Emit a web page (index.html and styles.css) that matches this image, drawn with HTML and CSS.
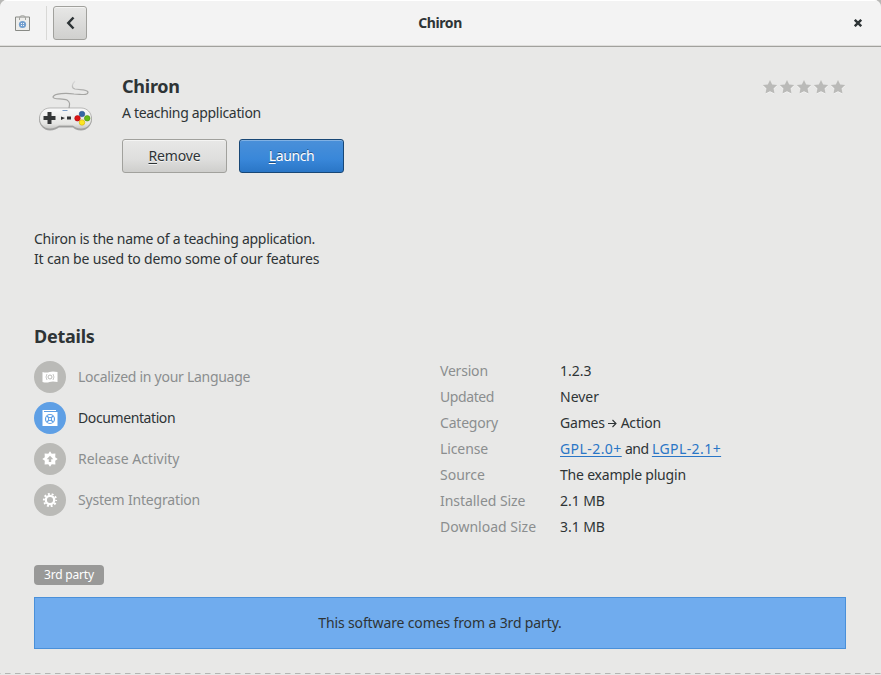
FILE: index.html
```html
<!DOCTYPE html>
<html lang="en">
<head>
<meta charset="utf-8">
<title>Chiron</title>
<link rel="stylesheet" href="styles.css">
</head>
<body>
<div class="window">
<header class="headerbar">
  <svg class="app-icon" width="16" height="16" viewBox="0 0 16 16"><path d="M.5 2h14v13.500H.5z" fill="#eeeeec" stroke="#888a85"/><path d="M4.500 5V3Q4.500.6 7.500.6T10.500 3V5" fill="none" stroke="#a3a49f"/><circle cx="7.500" cy="9.500" r="3.600" fill="#729fcf"/><path d="M6 8h1v1H6zm2 0h1v1H8zm-2 2h1v1H6zm2 0h1v1H8z" fill="#f3f3f3"/></svg>
  <span class="separator"></span>
  <button class="back" aria-label="Back"><svg width="16" height="16" viewBox="0 0 16 16"><path d="M11.500 2.500 6.300 8l5.200 5.500" fill="none" stroke="#2e3436" stroke-width="2.500"/></svg></button>
  <h1 class="title">Chiron</h1>
  <svg class="close" width="8" height="8" viewBox="0 0 8 8"><path d="M.8.8l6.400 6.400M7.200.8.8 7.200" stroke="#2e3436" stroke-width="2.400"/></svg>
</header>
<main class="content">
  <section class="hero">
    <svg class="gamepad" width="64" height="64" viewBox="0 0 64 64">
      <defs>
        <linearGradient id="shell" x2="0" y2="1"><stop stop-color="#fafafa"/><stop offset=".75" stop-color="#e5e5e3"/><stop offset="1" stop-color="#c4c4c2"/></linearGradient>
        <linearGradient id="cord" x2="0" y2="1"><stop stop-color="#aaa" stop-opacity=".2"/><stop offset=".4" stop-color="#a5a5a3"/></linearGradient>
      </defs>
      <path d="M41 6c-3 3-4 7 0 8 5 1 12 0 13 3 0 4-7 2-14 2-7-1-20-1-21 3 0 3 10 1 14 3 3 2 3 4 2 8" fill="none" stroke="url(#cord)" stroke-width="1.200"/>
      <path d="M16 34h31c6 0 10.800 4.500 10.800 10.500S53 55.500 47 55.500c-4 0-7-2-8-3H25c-2 1-5 3-9 3C10 55.500 5.200 50.500 5.200 44.500S10 34 16 34z" fill="#777" opacity=".6"/>
      <path d="M16 33h31c6 0 10.500 4.500 10.500 10.500S53 54 47 54c-4 0-7-2-8-3H25c-2 1-5 3-9 3C10 54 5.500 49.500 5.500 43.500S10 33 16 33z" fill="url(#shell)" stroke="#929290" stroke-width=".6"/>
      <path d="M13.500 37h4v4h4v4h-4v4h-4v-4h-4v-4h4z" fill="#343637"/>
      <path d="M27 41.500l4 1.500-4 2zM33 41.500h4v3h-4z" fill="#303234"/><path d="M28.500 35.500h5" stroke="#7b9cc5"/>
      <g stroke-width=".5"><circle cx="48" cy="39" r="2.800" fill="#3465a4" stroke="#204a87"/><circle cx="43.500" cy="43.300" r="2.800" fill="#dc1414" stroke="#a40000"/><circle cx="53.200" cy="43.300" r="2.800" fill="#65ba17" stroke="#438202"/><circle cx="48" cy="47.500" r="2.800" fill="#fce521" stroke="#c4a000"/></g>
    </svg>
    <div class="intro">
      <h2 class="name">Chiron</h2>
      <p class="summary">A teaching application</p>
      <div class="actions">
        <button class="button remove"><span><u>R</u>emove</span></button>
        <button class="button launch"><span><u>L</u>aunch</span></button>
      </div>
    </div>
    <svg class="stars" width="84" height="16" viewBox="0 0 84 16">
      <defs><path id="star" d="M8 1l2.200 4.500 5 .600-3.600 3.500.900 5L8 12.300l-4.500 2.300.900-5L.800 6.100l5-.600z"/></defs>
      <g fill="#fff" opacity=".7" transform="translate(0 .700)"><use href="#star"/><use href="#star" x="17"/><use href="#star" x="34"/><use href="#star" x="51"/><use href="#star" x="68"/></g>
      <g fill="#babab8"><use href="#star"/><use href="#star" x="17"/><use href="#star" x="34"/><use href="#star" x="51"/><use href="#star" x="68"/></g>
    </svg>
  </section>
  <p class="description"><span class="line-one">Chiron is the name of a teaching application.</span><br><span class="line-two">It can be used to demo some of our features</span></p>
  <h2 class="details-title">Details</h2>
  <section class="details">
    <ul class="features">
      <li><span class="round"><svg width="16" height="16" viewBox="0 0 16 16"><path d="M.5 3q4 1 7 0t8 0v10q-5-1-8 0t-7 0z" fill="#fff"/><g fill="none" stroke="#babab7"><circle cx="8" cy="8" r="2"/><path d="M5 5Q3 8 5 11M11 5q2 3 0 6" stroke-width=".8"/></g></svg></span><span class="f1">Localized in your Language</span></li>
      <li class="active"><span class="round"><svg width="16" height="16" viewBox="0 0 16 16"><path d="M.5 0H14v1H2v1h13.500v14H.5z" fill="#fff"/><g fill="none" stroke="#5e9fe5"><circle cx="8" cy="9" r="4.500" stroke-width="1.200"/><circle cx="8" cy="9" r="1.600"/><path d="M5 6l2 2m2 2 2 2m0-6L9 8m-2 2-2 2" stroke-width="1.300"/></g></svg></span><span class="f2">Documentation</span></li>
      <li><span class="round"><svg width="16" height="16" viewBox="0 0 16 16"><path d="M8 .3l1.700 2.500 3.700-.2-.2 3.700L15.700 8l-2.500 1.700.2 3.700-3.700-.2L8 15.700l-1.700-2.500-3.700.2.2-3.700L.3 8l2.500-1.700-.2-3.700 3.700.2z" fill="#fff"/><path d="M8 4.800l3.300 3.500H9.200V11H6.800V8.300H4.700z" fill="#babab7"/></svg></span><span class="f3">Release Activity</span></li>
      <li><span class="round"><svg width="16" height="16" viewBox="0 0 16 16"><circle cx="8" cy="8" r="4.200" fill="none" stroke="#fff" stroke-width="2.300"/><circle cx="8" cy="8" r="6.100" fill="none" stroke="#fff" stroke-width="2" stroke-dasharray="1.916 1.916" stroke-dashoffset=".958"/></svg></span><span class="f4">System Integration</span></li>
    </ul>
    <dl class="facts">
      <dt class="d1">Version</dt><dd class="v1">1.2.3</dd>
      <dt class="d2">Updated</dt><dd class="v2">Never</dd>
      <dt class="d3">Category</dt><dd class="v3">Games <svg width="9" height="9" viewBox="0 0 9 9"><path d="M0 4.500h8M4.500 1 8 4.500 4.500 8" fill="none" stroke="#2e3436" stroke-width="1.100"/></svg> Action</dd>
      <dt class="d4">License</dt><dd class="v4"><a>GPL-2.0+</a> and <a>LGPL-2.1+</a></dd>
      <dt class="d5">Source</dt><dd class="v5">The example plugin</dd>
      <dt class="d6">Installed Size</dt><dd class="v6">2.1 MB</dd>
      <dt class="d7">Download Size</dt><dd class="v7">3.1 MB</dd>
    </dl>
  </section>
  <span class="tag">3rd party</span>
  <div class="notice"><span>This software comes from a 3rd party.</span></div>
</main>
<svg class="overflow" width="881" height="1" viewBox="0 0 881 1"><path d="M-5 .5h890" stroke="#b5b5b3" stroke-dasharray="5.500 4.500"/></svg>
</div>
</body>
</html>
```
FILE: styles.css
```css
* { box-sizing: border-box; margin: 0; padding: 0; }
body { background: #b8b8b6; color: #2e3436; font: 14px/20px "Noto Sans", sans-serif; overflow: hidden; }
svg { display: block; flex: none; }
.window { width: 881px; height: 675px; background: #e8e8e7; border-radius: 7px 7px 0 0; display: flex; flex-direction: column; overflow: hidden; }
.headerbar { height: 47px; background: #f3f3f3; border-bottom: 1px solid #a1a19d; box-shadow: inset 0 1px #fff, inset 0 -1px #dedddb; display: flex; align-items: center; padding: 0 19px 0 15px; flex: none; }
.separator { width: 1px; height: 34px; background: #d8d8d6; margin: 0 6px 0 15px; }
.back { width: 34px; height: 34px; display: grid; place-items: center; border: 1px solid #a1a19d; border-radius: 3px; background: linear-gradient(#e7e7e6, #d0d0ce); box-shadow: inset 0 1px #f4f4f3; }
.title { flex: 1; margin-left: 9px; padding-right: 70px; text-align: center; font-size: 14px; line-height: 20px; letter-spacing: -.4px; }
.content { flex: none; height: 626px; padding: 28px 35px 0 34px; display: flex; flex-direction: column; }
.hero { display: flex; height: 98px; }
.intro { flex: 1; margin-left: 24px; margin-top: -1px; }
.name, .details-title { font-size: 18px; line-height: 24px; letter-spacing: -.25px; }
.summary { margin-top: 5px; letter-spacing: -.32px; }
.actions { display: flex; gap: 12px; margin-top: 16px; }
.button { width: 105px; height: 34px; border: 1px solid #a1a19d; border-radius: 3px; background: linear-gradient(#e8e8e7, #dededd 60%, #cececc); box-shadow: inset 0 1px #f5f5f4; color: #2e3436; font: inherit; letter-spacing: -.15px; text-shadow: 0 1px rgba(255,255,255,.7); }
.button u { text-underline-offset: 2px; text-decoration-thickness: 1px; }
.launch { border-color: #184776; background: linear-gradient(#4a90d9, #3987d9 60%, #2a76c6); box-shadow: inset 0 1px #80b1e4; color: #fff; letter-spacing: -.4px; text-shadow: 0 -1px rgba(0,0,0,.4); }
.stars { margin-top: 4px; }
.description { margin-top: 56px; }
.line-one { letter-spacing: -.27px; }
.line-two { letter-spacing: -.17px; }
.details-title { margin-top: 55px; }
.details { display: flex; height: 179px; margin-top: 13px; }
.features { width: 406px; list-style: none; display: flex; flex-direction: column; gap: 9px; color: #8b8e8f; }
.features li { height: 32px; display: flex; align-items: center; gap: 12px; letter-spacing: -.4px; }
.features .active { color: #2e3436; }
.features .f1 { letter-spacing: -.28px; }
.features .f3 { letter-spacing: 0; }
.features .f4 { letter-spacing: -.18px; }
.round { width: 32px; height: 32px; display: grid; place-items: center; border-radius: 50%; background: #babab7; }
.active .round { background: #5e9fe5; }
.facts { display: grid; grid-template-columns: 120px 252px; grid-auto-rows: 20px; row-gap: 6px; letter-spacing: -.2px; white-space: nowrap; }
.facts dt { color: #8b8e8f; }
.facts .d2 { letter-spacing: -.4px; }
.facts .d4 { letter-spacing: -.1px; }
.facts .d5, .facts .d7, .facts .v1, .facts .v2 { letter-spacing: 0; }
.facts .d6, .facts .v6, .facts .v7 { letter-spacing: -.05px; }
.facts .v4 { letter-spacing: -.45px; }
.facts svg { display: inline-block; }
.facts a { color: #2a76c6; letter-spacing: .43px; text-decoration: underline; text-decoration-thickness: 1px; text-underline-offset: 2px; }
.tag { align-self: flex-start; flex: none; height: 20px; width: 70px; margin-top: 25px; border-radius: 4px; background: #999998; color: #fff; font-size: 12px; line-height: 19px; text-align: center; letter-spacing: -.2px; }
.notice { flex: none; height: 52px; margin-top: 12px; display: grid; place-items: center; border: 1px solid #4a90d9; background: #70acee; letter-spacing: -.13px; }
```
